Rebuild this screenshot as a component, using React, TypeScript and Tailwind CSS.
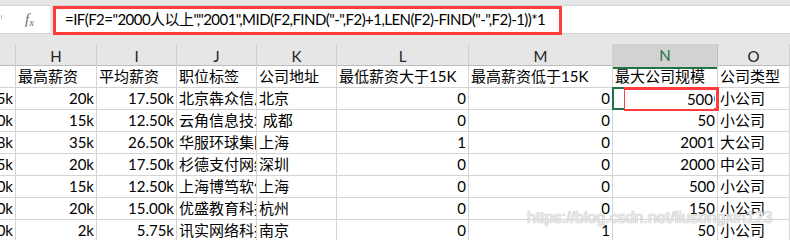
import React from "react";

const COLS = ["", "H", "I", "J", "K", "L", "M", "N", "O"];
const WIDTHS = "16px 81px 80px 80px 80px 132px 144px 105px 1fr";

type Cell = { v: string; r?: boolean };

const t = (v: string): Cell => ({ v });
const n = (v: string | number): Cell => ({ v: String(v), r: true });

const ROWS: Cell[][] = [
  [t(""), t("最高薪资"), t("平均薪资"), t("职位标签"), t("公司地址"), t("最低薪资大于15K"), t("最高薪资低于15K"), t("最大公司规模"), t("公司类型")],
  [n("15k"), n("20k"), n("17.50k"), t("北京犇众信息技术有限公司"), t("北京"), n(0), n(0), n(500), t("小公司")],
  [n("10k"), n("15k"), n("12.50k"), t("云角信息技术有限公司"), t("\u00a0成都"), n(0), n(0), n(50), t("小公司")],
  [n("18k"), n("35k"), n("26.50k"), t("华服环球集团有限公司"), t("上海"), n(1), n(0), n(2001), t("大公司")],
  [n("15k"), n("20k"), n("17.50k"), t("杉德支付网络服务"), t("深圳"), n(0), n(0), n(2000), t("中公司")],
  [n("10k"), n("15k"), n("12.50k"), t("上海博笃软件科技"), t("上海"), n(0), n(0), n(500), t("小公司")],
  [n("10k"), n("20k"), n("15.00k"), t("优盛教育科技有限公司"), t("杭州"), n(0), n(0), n(150), t("小公司")],
  [n("10k"), n("2k"), n("5.75k"), t("讯实网络科技有限公司"), t("南京"), n(0), n(1), n(50), t("小公司")],
];

const FONT = "font-['Lato','Noto_Sans_CJK_SC',sans-serif]";

export default function App() {
  return (
    <div className={`relative w-[790px] h-[240px] overflow-hidden bg-[#e6e6e6] ${FONT} text-black`}>
      {/* formula bar */}
      <div className="flex h-[44px] pt-[5px] pb-[10px]">
        <div className="relative flex w-[50px] items-center bg-white border-y border-[#d4d4d4]">
          <span className="absolute left-[1px] top-[9px] h-[4px] w-[1px] bg-[#b8b8b8]" />
          <span className="ml-[25px] font-['Liberation_Serif',serif] italic text-[15px] text-[#6b6b6b] leading-none">
            f<span className="text-[11px] align-[-2px]">x</span>
          </span>
        </div>
        <div className="w-[3px]" />
        <div className="relative flex flex-1 items-center bg-white border-y border-[#d4d4d4]">
          <div className="absolute left-0 top-[0px] h-[29px] w-[509px] border-[3px] border-[#ff3b3b]" />
          <span className="ml-[12px] whitespace-nowrap text-[15px] leading-none tracking-[-0.55px]">
            =IF(F2="2000人以上","2001",MID(F2,FIND("-",F2)+1,LEN(F2)-FIND("-",F2)-1))*1
          </span>
        </div>
      </div>

      {/* column headers */}
      <div className="grid h-[22px] border-b border-[#bcbcbc]" style={{ gridTemplateColumns: WIDTHS }}>
        {COLS.map((c, i) => (
          <div
            key={i}
            className={
              c === "N"
                ? "flex items-center justify-center border-r border-[#bcbcbc] bg-[#d2d2d2] text-[#217346] text-[15px] border-b-2 border-b-[#217346] -mb-[1px]"
                : "flex items-center justify-center border-r border-[#cfcfcf] text-[15px] text-[#222]"
            }
          >
            {c}
          </div>
        ))}
      </div>

      {/* data grid */}
      <div className="grid bg-white" style={{ gridTemplateColumns: WIDTHS }}>
        {ROWS.map((row, ri) =>
          row.map((cell, ci) => (
            <div
              key={`${ri}-${ci}`}
              className={`relative flex h-[22px] items-end overflow-hidden whitespace-nowrap border-r border-b border-[#d4d4d4] pb-[1px] text-[15px] leading-[19px] ${
                cell.r ? "justify-end pr-[2px]" : "justify-start pl-[2px]"
              }`}
            >
              <span className="shrink-0">{cell.v}</span>
            </div>
          ))
        )}
      </div>

      {/* selection & annotation overlays */}
      <div className="absolute left-[612px] top-[87px] h-[23px] w-[106px] border-2 border-[#217346]" />
      <div className="absolute left-[715px] top-[107px] h-[5px] w-[5px] bg-[#217346] border border-white" />
      <div className="absolute left-[624px] top-[87px] h-[24px] w-[95px] border-[3px] border-[#ff3b3b]" />
      <div className="absolute left-[625px] top-[90px] flex h-[19px] w-[89px] items-end justify-end bg-white pr-[1px] text-[15px] leading-[19px]">
        500
      </div>

      {/* watermark */}
      <div className="absolute left-[527px] top-[210px] font-['Liberation_Sans',Arial,sans-serif] text-[16px] leading-none text-[#ececec] [text-shadow:0_0_1px_#b5b5b5,0_0_1px_#b5b5b5]">
        https://blog.csdn.net/liusongxin123
      </div>
    </div>
  );
}
